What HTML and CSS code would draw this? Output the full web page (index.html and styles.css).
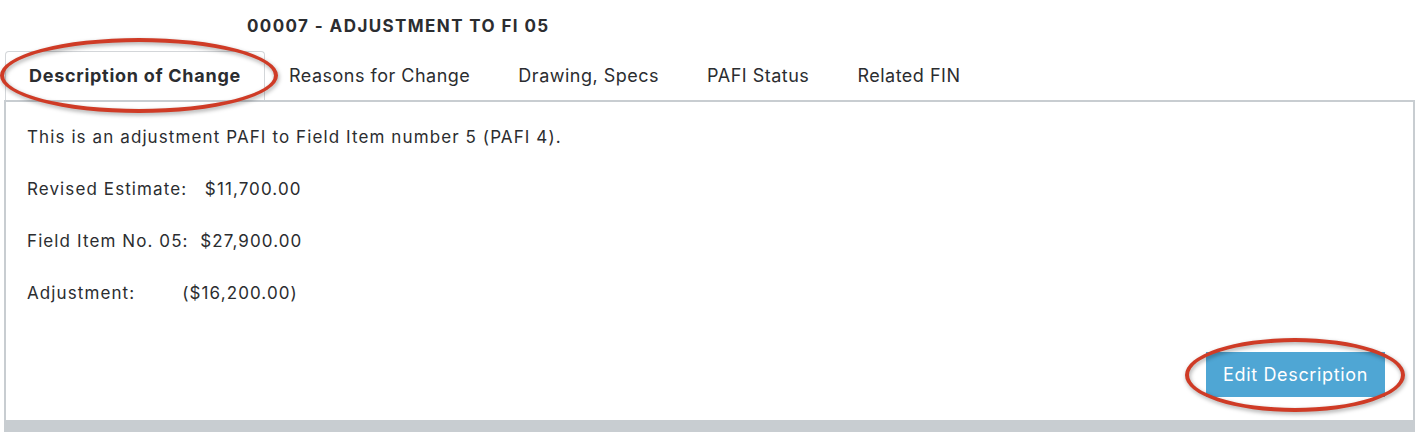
FILE: index.html
```html
<!DOCTYPE html>
<html lang="en">
<head>
<meta charset="UTF-8">
<title>00007 - Adjustment to FI 05</title>
<link rel="stylesheet" href="styles.css">
</head>
<body>
<div class="page">
  <h3 class="title">00007 - ADJUSTMENT TO FI 05</h3>

  <ul class="tabs">
    <li class="tab active">Description of Change<span class="mark mark-tab"></span></li>
    <li class="tab">Reasons for Change</li>
    <li class="tab">Drawing, Specs</li>
    <li class="tab">PAFI Status</li>
    <li class="tab">Related FIN</li>
  </ul>

  <div class="panel">
    <p>This is an adjustment PAFI to Field Item number 5 (PAFI 4).</p>
    <p>Revised Estimate:&nbsp;&nbsp; $11,700.00</p>
    <p>Field Item No. 05:&nbsp; $27,900.00</p>
    <p>Adjustment:&nbsp;&nbsp;&nbsp;&nbsp;&nbsp;&nbsp;&nbsp; ($16,200.00)</p>

    <div class="actions">
      <button class="btn">Edit Description<span class="mark mark-btn"></span></button>
    </div>
  </div>
</div>
</body>
</html>
```

FILE: styles.css
```css
:root{
  --txt:#2b2d30;--line:#c8cdd1;--tab-line:#d3d6d9;
  --accent:#4fa6d4;--mark:#cf3b26}
body{margin:0;background:#fff;color:var(--txt);font-family:Inter,"Liberation Sans",Arial,sans-serif}
.page{padding-top:15px}

.title{margin:0 0 0 247px;font-size:17px;line-height:22px;font-weight:700;letter-spacing:1.4px;color:#2b2d30}

/* tabs */
.tabs{display:flex;list-style:none;margin:14px 0 0 5px;padding:0;height:49px}
.tab{position:relative;padding:0 23px;line-height:48px;font-size:18px;letter-spacing:.5px;color:#2b2d30;border:1px solid transparent;border-bottom:0;border-radius:4px 4px 0 0}
.tab.active{font-weight:700;letter-spacing:.72px;border-color:var(--tab-line)}

/* panel */
.panel{margin:0 7px 0 4px;border:2px solid var(--line);border-bottom-width:12px;padding:25px 28px 23px 21px}
.panel p{margin:0 0 32px;font-size:17px;line-height:20px;letter-spacing:1.1px}
.actions{display:flex;justify-content:flex-end;padding-top:17px}
.btn{position:relative;border:0;border-radius:0;background:var(--accent);color:#fff;font:inherit;font-size:18px;letter-spacing:.65px;height:45px;padding:0 17px;cursor:pointer}

/* annotation ellipses */
.mark{position:absolute;box-sizing:border-box;border:4px solid var(--mark);border-radius:50%;pointer-events:none;
  filter:drop-shadow(1px 2px 2px rgba(0,0,0,.35))}
.mark-tab{left:-6px;top:-14px;width:278px;height:75px}
.mark-btn{left:-21px;top:-14px;width:220px;height:74px}
```
